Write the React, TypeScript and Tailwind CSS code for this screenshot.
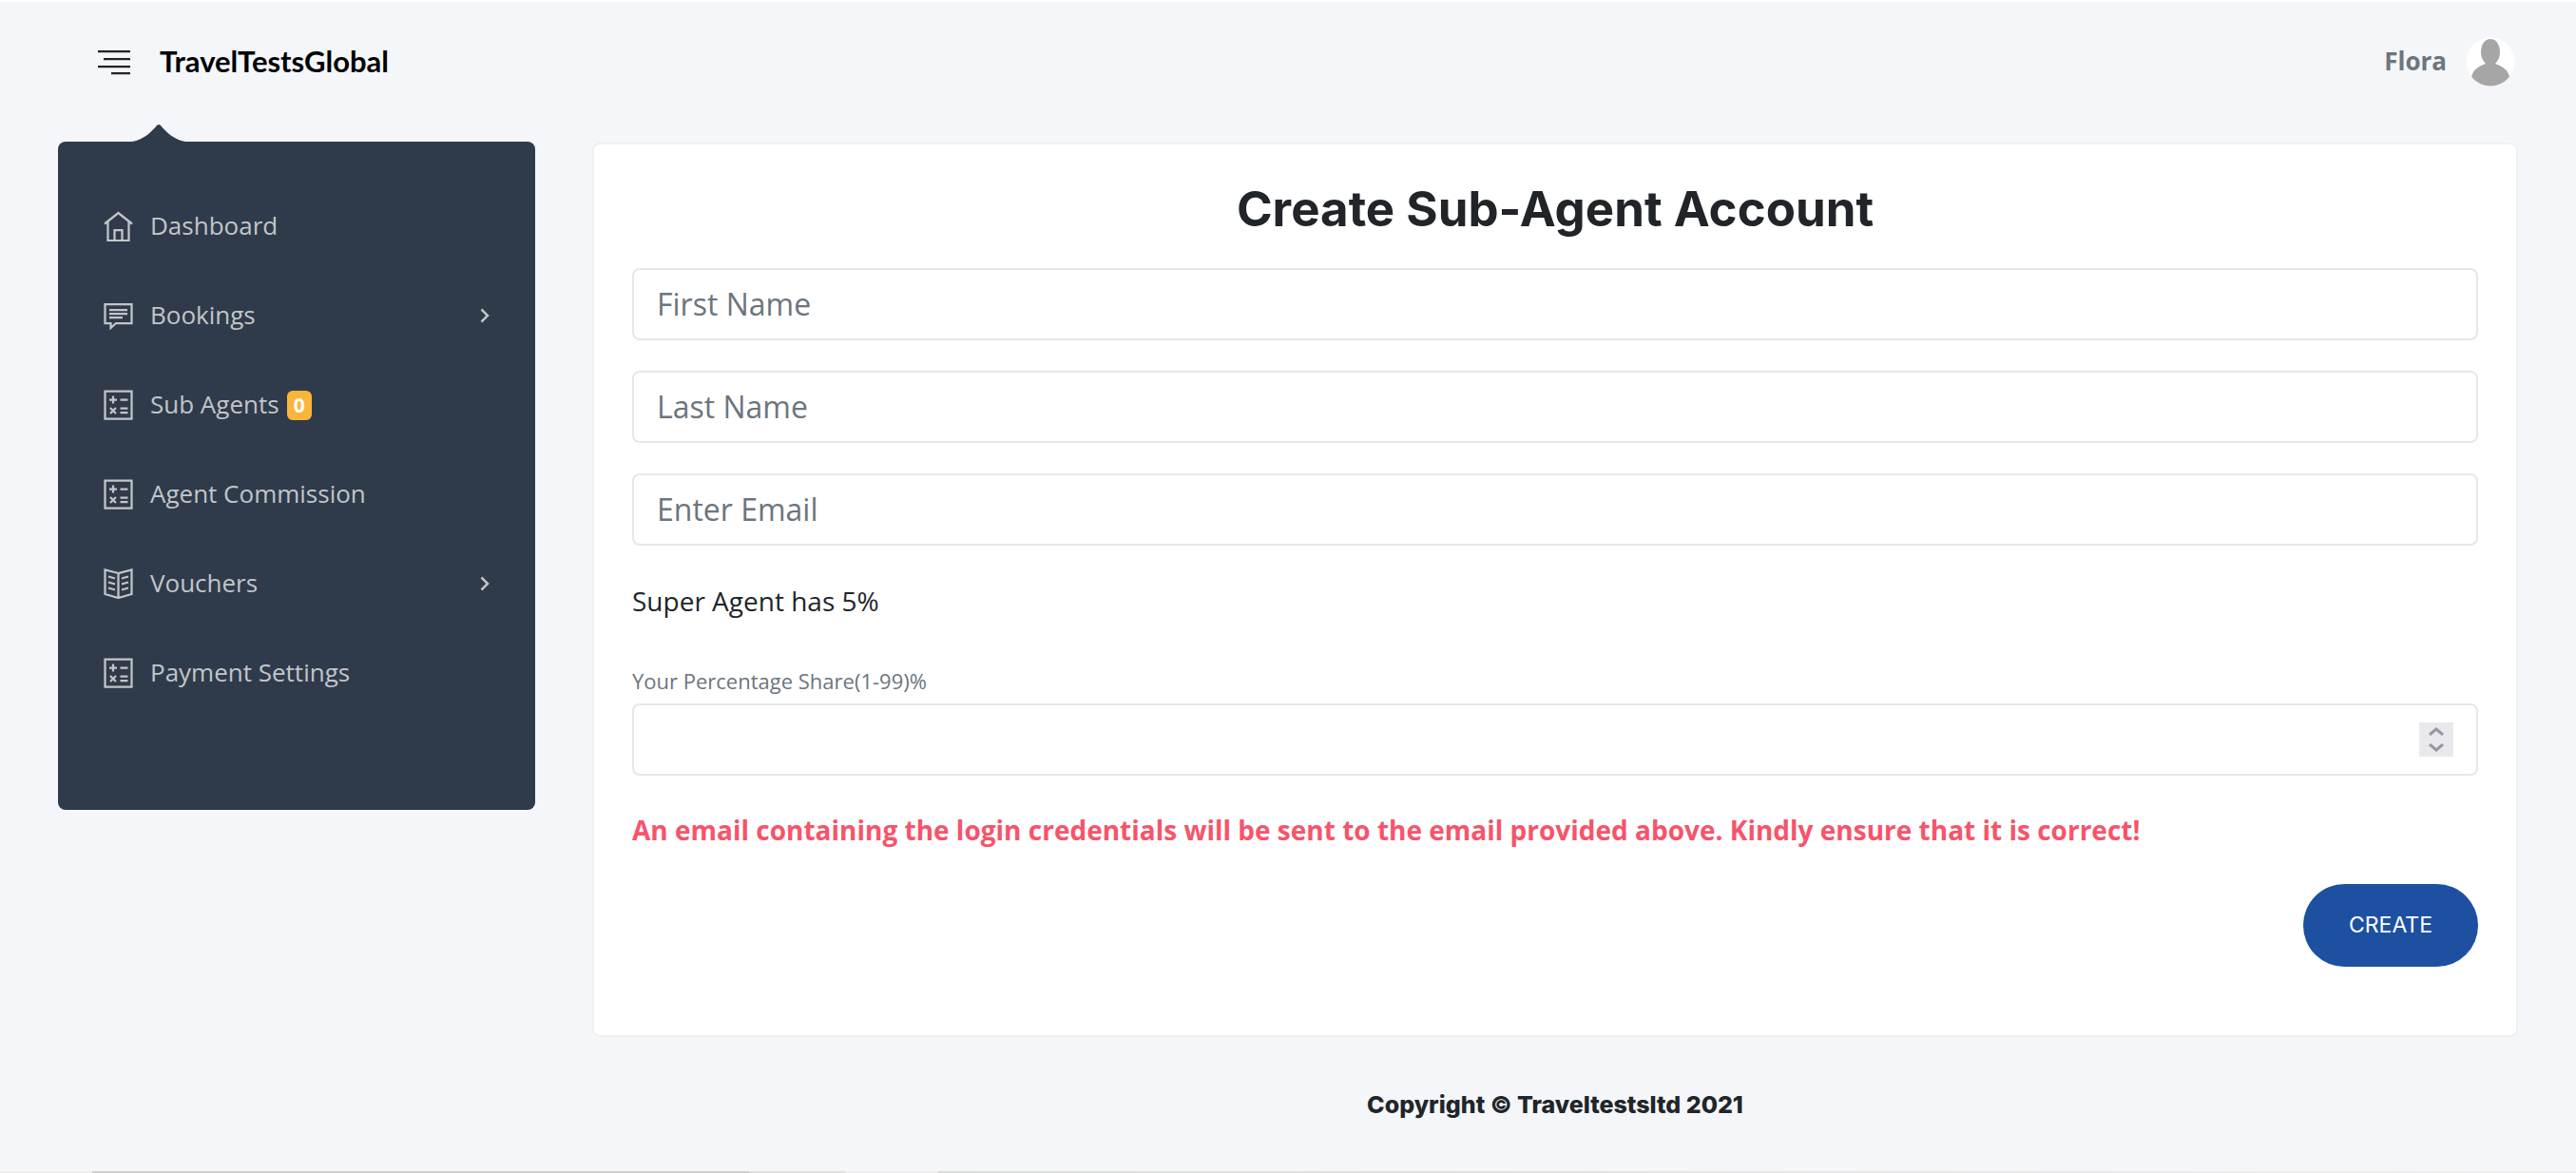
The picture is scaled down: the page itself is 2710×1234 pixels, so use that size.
import React from "react";

const ink = "#c3c5c8";

function HomeIcon() {
  return (
    <svg viewBox="0 0 32 32" className="h-8 w-8 shrink-0" fill="none" stroke={ink} strokeWidth="2.250">
      <path d="M1 13.500 15.500 2 30 13.500M4.500 11v20h22V11M11.500 31V20h8v11" />
    </svg>
  );
}

function ChatIcon() {
  return (
    <svg viewBox="0 0 32 32" className="h-8 w-8 shrink-0" fill="none" stroke={ink} strokeWidth="2.250">
      <path d="M1.500 4h28v20H13l-5.500 5v-5h-6z" />
      <path d="M6 10h19M6 14h19M6 18h14" />
    </svg>
  );
}

function CalcIcon() {
  return (
    <svg viewBox="0 0 32 32" className="h-8 w-8 shrink-0" fill="none" stroke={ink} strokeWidth="2.250">
      <path d="M1.500 1.500h28v29h-28z" />
      <path d="M6 10.500h8M10 6.500v8M17.500 10.500h8M17.500 19.500h8M17.500 24h8M7 19l6 6M13 19l-6 6" />
    </svg>
  );
}

function BookIcon() {
  return (
    <svg viewBox="0 0 32 32" className="h-8 w-8 shrink-0" fill="none" stroke={ink} strokeWidth="2.250">
      <path d="M15.500 5l-14-3.500v25.500l14 4 14-4V1.500zM15.500 5v26" />
      <path d="m5 8.500 7 2M5 14.500l7 2M5 20.500l7 2M26 8.500l-7 2M26 14.500l-7 2M26 20.500l-7 2" />
    </svg>
  );
}

const items = [
  { label: "Dashboard", Icon: HomeIcon },
  { label: "Bookings", Icon: ChatIcon, expandable: true },
  { label: "Sub Agents", Icon: CalcIcon, badge: "0" },
  { label: "Agent Commission", Icon: CalcIcon },
  { label: "Vouchers", Icon: BookIcon, expandable: true },
  { label: "Payment Settings", Icon: CalcIcon },
];

function Header() {
  return (
    <header className="flex h-[127px] items-start justify-between pr-16 pl-[102px]">
      <div className="flex h-[125px] items-center gap-[30px]">
        <button aria-label="Toggle menu" type="button">
          <svg viewBox="0 0 36 28" className="h-7 w-9" fill="none" stroke="#222" strokeWidth="2.250">
            <path d="M1 3h34M7 11h28M1 19h34M15 26h20" />
          </svg>
        </button>
        <a href="#" className="pb-0.5 font-['Lato'] text-[31px] leading-9 font-bold text-black">
          TravelTestsGlobal
        </a>
      </div>
      <button type="button" className="flex h-[126px] items-center gap-5">
        <span className="pb-0.5 text-[26px] leading-9 font-bold text-[#6c757d]">Flora</span>
        <svg viewBox="0 0 52 52" className="h-[52px] w-[52px]">
          <clipPath id="avatar">
            <circle cx="26" cy="26" r="25.500" />
          </clipPath>
          <g clipPath="url(#avatar)">
            <path d="M0 0h52v52H0z" fill="#fff" />
            <path
              d="M26 2c6 0 10 6 10 14 0 5-2 9-5 12 8 3 13 6 15 14v10H6V42c2-8 7-11 15-14-3-3-5-7-5-12C16 8 20 2 26 2z"
              fill="#a6a6a6"
            />
          </g>
        </svg>
      </button>
    </header>
  );
}

function Sidebar() {
  return (
    <aside className="flex w-[502px] shrink-0 flex-col self-start">
      <svg viewBox="0 0 56 20" className="ml-[78px] h-5 w-14" fill="#2f3b4b">
        <path d="M0 20c12-2 20-10 26-17q2-2 4 0c6 7 14 15 26 17z" />
      </svg>
      <nav className="rounded-lg bg-[#2f3b4b] pt-[42px] pb-[97px]">
        <ul>
          {items.map(({ label, Icon, badge, expandable }) => (
            <li key={label}>
              <a href="#" className="flex h-[94px] items-center px-12 text-[26px] leading-9 text-[#c3c5c8]">
                <Icon />
                <span className="ml-[17px] pb-0.5">{label}</span>
                {badge && (
                  <span className="ml-2 rounded-md bg-[#fcb53b] px-[7px] text-[21px] leading-[31px] font-bold text-white">
                    {badge}
                  </span>
                )}
                {expandable && (
                  <svg viewBox="0 0 10 16" className="ml-auto h-4 w-2.5" fill="none" stroke={ink} strokeWidth="2.500">
                    <path d="m1.500 1.500 6.500 6.500-6.500 6.500" />
                  </svg>
                )}
              </a>
            </li>
          ))}
        </ul>
      </nav>
    </aside>
  );
}

function Field({ label, type = "text" }: { label: string; type?: string }) {
  return (
    <input
      type={type}
      aria-label={label}
      placeholder={label}
      className="h-[76px] w-full rounded-lg border-2 border-[#e4e7eb] bg-white px-6 pb-0.5 text-[32px] text-[#495057] outline-none placeholder:text-[#6c757d] placeholder:opacity-100"
    />
  );
}

function Card() {
  return (
    <form className="mt-[21px] flex flex-col rounded-lg border-2 border-[#eff0f2] bg-white px-10 pt-[38px] pb-[72px]">
      <h1 className="text-center font-['Inter'] text-[51px] leading-[60px] font-bold text-[#212529]">
        Create Sub-Agent Account
      </h1>
      <div className="mt-8 flex flex-col gap-8">
        <Field label="First Name" />
        <Field label="Last Name" />
        <Field label="Enter Email" type="email" />
      </div>
      <p className="mt-[38px] text-[28px] leading-10 text-[#212529]">Super Agent has 5%</p>
      <label htmlFor="share" className="mt-12 text-[22px] leading-8 text-[#6c757d]">
        Your Percentage Share(1-99)%
      </label>
      <div className="mt-2 flex h-[76px] items-center rounded-lg border-2 border-[#e4e7eb] px-6">
        <input
          id="share"
          type="number"
          min={1}
          max={99}
          className="h-full min-w-0 flex-1 appearance-none text-[32px] outline-none [&::-webkit-inner-spin-button]:appearance-none"
        />
        <div className="flex h-9 w-9 flex-col items-center justify-center gap-2 bg-[#e9e9ed]">
          <button type="button" aria-label="Increase">
            <svg viewBox="0 0 16 9" className="block h-[9px] w-4" fill="none" stroke="#9797a3" strokeWidth="3">
              <path d="m1 8 7-6 7 6" />
            </svg>
          </button>
          <button type="button" aria-label="Decrease">
            <svg viewBox="0 0 16 9" className="block h-[9px] w-4" fill="none" stroke="#9797a3" strokeWidth="3">
              <path d="m1 1 7 6 7-6" />
            </svg>
          </button>
        </div>
      </div>
      <p className="mt-[37px] text-[28px] leading-10 font-bold text-[#f6546a]">
        An email containing the login credentials will be sent to the email provided above. Kindly ensure that it is
        correct!
      </p>
      <button
        type="submit"
        className="mt-[37px] h-[87px] self-end rounded-full bg-[#1d50a0] px-12 font-['Inter'] text-[23px] text-white"
      >
        CREATE
      </button>
    </form>
  );
}

export default function App() {
  return (
    <div className="flex min-h-screen flex-col border-t-2 border-white bg-[#f4f6fa] font-['Open_Sans',sans-serif]">
      <Header />
      <div className="flex gap-[60px] px-[61px]">
        <Sidebar />
        <main className="min-w-0 flex-1">
          <Card />
          <footer className="mt-[51px] text-center font-['Inter'] text-[25px] leading-10 font-extrabold text-[#212529]">
            Copyright © Traveltestsltd 2021
          </footer>
        </main>
      </div>
      <div className="mt-auto flex h-0.5">
        <div className="w-[97px] bg-[#efeeec]" />
        <div className="w-[691px] bg-[#d0d0d0]" />
        <div className="w-[102px] bg-[#e0e0e0]" />
        <div className="w-[97px] bg-[#f1f0ef]" />
        <div className="flex-1 bg-linear-to-r from-[#dadbdb] to-[#f0f0ee]" />
      </div>
    </div>
  );
}
